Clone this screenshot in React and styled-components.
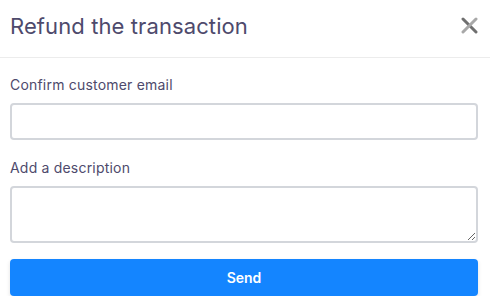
import React from 'react'
import styled, { createGlobalStyle } from 'styled-components'

const GlobalStyle = createGlobalStyle`
  body {
    margin: 0;
    background: #fff;
    font-family: Inter, "Noto Sans", sans-serif;
  }
`

const Modal = styled.div`
  width: 490px;
  background: #fff;
`

const Header = styled.div`
  height: 58px;
  padding: 0 12px 6px 10px;
  display: flex;
  align-items: center;
  justify-content: space-between;
  border-bottom: 1px solid #ececec;
  box-sizing: border-box;
`

const Title = styled.h2`
  margin: 0;
  font-size: 22px;
  font-weight: 400;
  color: #4e4a6c;
  letter-spacing: 0.1px;
`

const CloseButton = styled.button`
  border: none;
  background: none;
  padding: 0;
  width: 18px;
  height: 18px;
  display: flex;
  align-items: center;
  justify-content: center;
  cursor: pointer;
`

const Body = styled.form`
  padding: 17px 12px 0 10px;
  display: flex;
  flex-direction: column;
`

const Label = styled.label`
  display: block;
  font-size: 14px;
  line-height: 20px;
  letter-spacing: 0.2px;
  color: #4e4a6c;
  margin-bottom: 8px;
`

const Field = styled.div`
  margin-bottom: ${p => p.$gap}px;
`

const Input = styled.input`
  display: block;
  width: 100%;
  height: 37px;
  box-sizing: border-box;
  border: 2px solid #d3d6db;
  border-radius: 4px;
  font: inherit;
  outline: none;
`

const TextArea = styled.textarea`
  display: block;
  width: 100%;
  height: 57px;
  box-sizing: border-box;
  border: 2px solid #d3d6db;
  border-radius: 4px;
  font: inherit;
  outline: none;
`

const SendButton = styled.button`
  width: 100%;
  height: 37px;
  border: none;
  border-radius: 4px;
  background: #1485ff;
  color: #fff;
  font-family: inherit;
  font-size: 14px;
  font-weight: 600;
  box-shadow: 0 2px 4px rgba(0, 0, 0, 0.12);
  cursor: pointer;
`

const CloseIcon = () => (
  <svg width="17" height="17" viewBox="0 0 17 17">
    <path d="M2 2 L15 15" stroke="#6f6f6f" strokeWidth="3" strokeLinecap="round" />
    <path d="M15 2 L2 15" stroke="#a8a8a8" strokeWidth="3" strokeLinecap="round" />
  </svg>
)

const App = () => {
  return (
    <Modal>
      <GlobalStyle />
      <Header>
        <Title>Refund the transaction</Title>
        <CloseButton aria-label="Close"><CloseIcon /></CloseButton>
      </Header>
      <Body onSubmit={e => e.preventDefault()}>
        <Field $gap={18}>
          <Label>Confirm customer email</Label>
          <Input type="email" />
        </Field>
        <Field $gap={16}>
          <Label>Add a description</Label>
          <TextArea />
        </Field>
        <SendButton type="submit">Send</SendButton>
      </Body>
    </Modal>
  )
}

export default App
